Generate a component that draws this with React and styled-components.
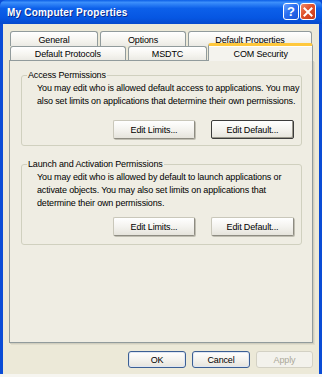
import React from "react";
import styled, { createGlobalStyle, css } from "styled-components";

const GlobalStyle = createGlobalStyle`
  html, body {
    margin: 0;
    padding: 0;
    background: #f6f5f0;
  }
  * {
    box-sizing: border-box;
  }
`;

const font = `"Liberation Sans", Arial, sans-serif`;

const Window = styled.div`
  width: 322px;
  height: 374px;
  display: flex;
  flex-direction: column;
  background: #0a4cd6;
  padding: 0 3px;
  font-family: ${font};
  font-size: 9px;
  letter-spacing: -0.15px;
  color: #000;
`;

const TitleBar = styled.div`
  height: 25px;
  margin: 0 -3px;
  padding: 0 6px 0 7px;
  display: flex;
  align-items: center;
  justify-content: space-between;
  background: linear-gradient(
    180deg,
    #0b5ee6 0%,
    #3c8ffb 10%,
    #0c60ea 35%,
    #0656e2 75%,
    #0549cc 100%
  );
  border-radius: 6px 6px 0 0;
`;

const Title = styled.span`
  color: #fff;
  font-weight: bold;
  font-size: 10px;
  letter-spacing: 0.2px;
  text-shadow: 1px 1px 0 #0a2a8a;
`;

const Controls = styled.div`
  display: flex;
  gap: 1px;
  margin-top: -1px;
`;

const CtrlButton = styled.div`
  width: 16px;
  height: 17px;
  border: 1px solid #fff;
  border-radius: 3px;
  display: flex;
  align-items: center;
  justify-content: center;
  color: #fff;
  font-weight: bold;
  font-size: 13px;
  letter-spacing: 0;
  ${(p) =>
    p.$close
      ? css`
          background: linear-gradient(135deg, #f08a6a 0%, #e0502a 45%, #c5391a 100%);
        `
      : css`
          background: linear-gradient(135deg, #6aa2ff 0%, #2a6ef0 45%, #1a52d6 100%);
        `}
`;

const Body = styled.div`
  flex: 1;
  background: #ece9d8;
  padding: 7px 6px 6px 6px;
  display: flex;
  flex-direction: column;
`;

const TabStrip = styled.div`
  display: flex;
  flex-direction: column;
  padding-left: 1px;
  position: relative;
  z-index: 1;
`;

const TabRow = styled.div`
  display: flex;
  gap: 2px;
  height: ${(p) => p.$h}px;
  align-items: flex-end;
`;

const Tab = styled.div`
  width: ${(p) => p.$w}px;
  height: ${(p) => p.$h || 15}px;
  border: 1px solid #919b9c;
  border-bottom: none;
  border-radius: 3px 3px 0 0;
  background: linear-gradient(180deg, #ffffff 0%, #f5f4ef 60%, #ebeae4 100%);
  display: flex;
  align-items: center;
  justify-content: center;
  padding-top: 1px;
  white-space: nowrap;
  ${(p) =>
    p.$active &&
    css`
      background: #f4f3ee;
      border-top: 3px solid #ffc83c;
      box-shadow: inset 0 1px 0 #ffffff;
      margin-bottom: -1px;
      margin-left: -1px;
      padding-top: 0;
    `}
`;

const Panel = styled.div`
  height: 283px;
  border: 1px solid #919b9c;
  box-shadow: 1px 1px 0 #d0cebf, 2px 2px 0 #e0ddcc;
  background: #efede3;
  padding: 8px 10px 0 11px;
  display: flex;
  flex-direction: column;
  gap: 12px;
`;

const Group = styled.fieldset`
  margin: 0;
  border: 1px solid #d0d0bf;
  border-radius: 3px;
  padding: 0 7px 0 15px;
  min-width: 0;
  height: ${(p) => p.$h}px;
  display: flex;
  flex-direction: column;
`;

const Legend = styled.legend`
  padding: 0 1px;
  margin-left: -10px;
  line-height: 13px;
`;

const Text = styled.p`
  margin: 0;
  line-height: 13px;
  white-space: nowrap;
`;

const ButtonRow = styled.div`
  display: flex;
  justify-content: flex-end;
  gap: ${(p) => p.$gap}px;
  margin-top: ${(p) => p.$top}px;
`;

const Button = styled.div`
  width: ${(p) => p.$w}px;
  height: ${(p) => p.$h}px;
  display: flex;
  align-items: center;
  justify-content: center;
  border-radius: 2px;
  background: linear-gradient(180deg, #ffffff 0%, #f4f3ef 50%, #e6e4dc 100%);
  ${(p) =>
    p.$variant === "plain" &&
    css`
      border: 1px solid #c9c7ba;
      border-right-color: #8e8c82;
      border-bottom-color: #8e8c82;
      box-shadow: 1px 1px 0 #c0beb2;
    `}
  ${(p) =>
    p.$variant === "dark" &&
    css`
      border: 1px solid #3c3c3c;
      box-shadow: inset -1px -1px 0 #9a988c;
    `}
  ${(p) =>
    p.$variant === "primary" &&
    css`
      border: 1px solid #3b5f94;
      border-radius: 3px;
      box-shadow: inset 0 0 0 1px #dfe6f2;
    `}
  ${(p) =>
    p.$variant === "disabled" &&
    css`
      border: 1px solid #d3d1c4;
      border-radius: 3px;
      background: #f3f2ec;
      color: #aca899;
    `}
`;

const Footer = styled.div`
  display: flex;
  justify-content: flex-end;
  gap: 6px;
  margin-top: 8px;
`;

export default function App() {
  return (
    <>
      <GlobalStyle />
      <Window>
        <TitleBar>
          <Title>My Computer Properties</Title>
          <Controls>
            <CtrlButton>?</CtrlButton>
            <CtrlButton $close>
              <svg width="10" height="10" viewBox="0 0 10 10">
                <path d="M1.5 1.5 L8.5 8.5 M8.5 1.5 L1.5 8.5" stroke="#fff" strokeWidth="2" strokeLinecap="square" />
              </svg>
            </CtrlButton>
          </Controls>
        </TitleBar>
        <Body>
          <TabStrip>
            <TabRow $h={15}>
              <Tab $w={88}>General</Tab>
              <Tab $w={86}>Options</Tab>
              <Tab $w={124}>Default Properties</Tab>
            </TabRow>
            <TabRow $h={14}>
              <Tab $w={116} $h={14}>Default Protocols</Tab>
              <Tab $w={80} $h={14}>MSDTC</Tab>
              <Tab $w={105} $h={18} $active>COM Security</Tab>
            </TabRow>
          </TabStrip>
          <Panel>
            <Group $h={77}>
              <Legend>Access Permissions</Legend>
              <Text>
                You may edit who is allowed default access to applications. You may
                <br />
                also set limits on applications that determine their own permissions.
              </Text>
              <ButtonRow $gap={16} $top={12}>
                <Button $w={82} $h={19} $variant="plain">Edit Limits...</Button>
                <Button $w={83} $h={19} $variant="dark">Edit Default...</Button>
              </ButtonRow>
            </Group>
            <Group $h={87}>
              <Legend>Launch and Activation Permissions</Legend>
              <Text>
                You may edit who is allowed by default to launch applications or
                <br />
                activate objects. You may also set limits on applications that
                <br />
                determine their own permissions.
              </Text>
              <ButtonRow $gap={16} $top={7}>
                <Button $w={82} $h={19} $variant="plain">Edit Limits...</Button>
                <Button $w={83} $h={19} $variant="plain">Edit Default...</Button>
              </ButtonRow>
            </Group>
          </Panel>
          <Footer>
            <Button $w={58} $h={17} $variant="primary">OK</Button>
            <Button $w={58} $h={17} $variant="primary">Cancel</Button>
            <Button $w={57} $h={17} $variant="disabled">Apply</Button>
          </Footer>
        </Body>
      </Window>
    </>
  );
}
